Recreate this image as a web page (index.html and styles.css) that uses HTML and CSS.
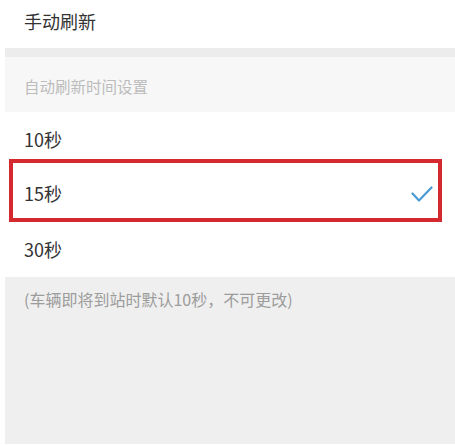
FILE: index.html
```html
<!DOCTYPE html>
<html lang="zh">
<head>
<meta charset="utf-8">
<link rel="stylesheet" href="styles.css">
</head>
<body>
<div class="page">
  <div class="row manual">手动刷新</div>
  <div class="band"></div>
  <div class="section-title">自动刷新时间设置</div>
  <div class="options">
    <div class="row option">10秒</div>
    <div class="row option selected">
      <span>15秒</span>
      <svg class="check" width="22" height="17" viewBox="0 0 22 17"><polyline points="1.5,7.5 8,14.5 20.5,1.5" fill="none" stroke="#4a9bd4" stroke-width="2.2" stroke-linecap="round" stroke-linejoin="round"/></svg>
    </div>
    <div class="row option">30秒</div>
  </div>
  <div class="footer">(车辆即将到站时默认10秒，不可更改)</div>
</div>
<div class="highlight"></div>
</body>
</html>
```
FILE: styles.css
```css
html, body {
  margin: 0;
  padding: 0;
  background: #ffffff;
}
body {
  position: relative;
  width: 455px;
  height: 445px;
  overflow: hidden;
  font-family: "Noto Sans CJK SC", "Noto Sans", sans-serif;
}
.page {
  margin-left: 5px;
  display: flex;
  flex-direction: column;
}
.row {
  display: flex;
  align-items: center;
  padding-left: 19px;
  color: #333333;
  font-size: 18px;
}
.manual {
  height: 42px;
  padding-bottom: 6px;
}
.band {
  height: 9px;
  background: #ececec;
}
.section-title {
  height: 55px;
  box-sizing: border-box;
  padding-left: 19px;
  padding-top: 17px;
  line-height: 24px;
  font-size: 15.5px;
  color: #bcbcbc;
  background: #f7f7f7;
}
.options {
  display: flex;
  flex-direction: column;
}
.option {
  height: 54px;
  justify-content: space-between;
  padding-right: 22px;
}
.option:last-child {
  height: 57px;
}
.check {
  display: block;
  margin-top: 2px;
}
.footer {
  height: 167px;
  box-sizing: border-box;
  padding-left: 19px;
  padding-top: 10px;
  line-height: 24px;
  font-size: 16px;
  color: #9c9c9c;
  background: #efefef;
}
.highlight {
  position: absolute;
  left: 9px;
  top: 159px;
  width: 425px;
  height: 55px;
  border: 4px solid #d42a2f;
}
```
